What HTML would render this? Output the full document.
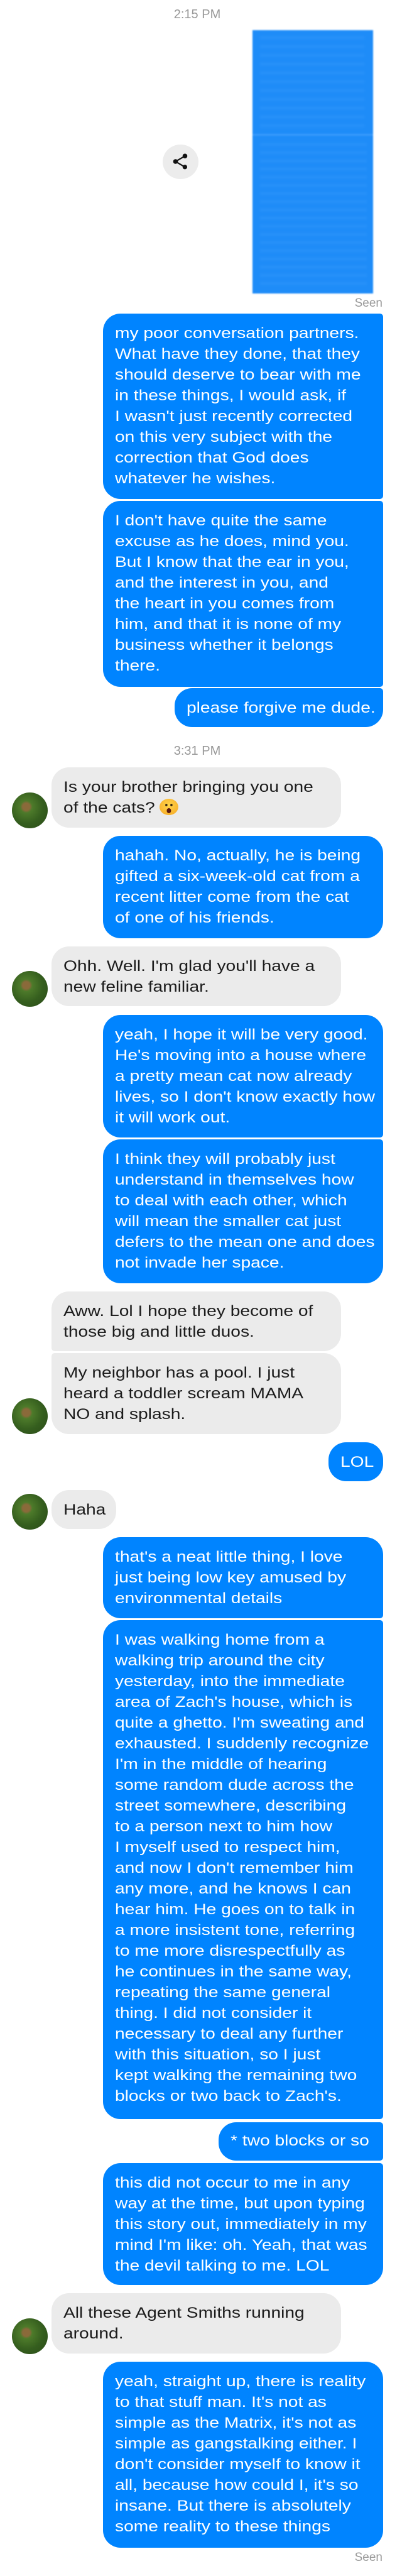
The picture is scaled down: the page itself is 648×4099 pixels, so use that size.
<!DOCTYPE html>
<html><head><meta charset="utf-8"><style>
*{margin:0;padding:0;box-sizing:border-box}
body{width:648px;height:4099px;background:#fff;position:relative;overflow:hidden;font-family:"Liberation Sans",Arial,sans-serif}
.b{position:absolute;font-size:24.5px;line-height:33px;padding:15px 19px 0 19px;white-space:nowrap;border-radius:28px}
.t{display:inline-block;transform:scaleX(1.15);transform-origin:0 0}
.s{background:#0084ff;color:#fff;left:164px;right:38px}
.r{background:#ebebeb;color:#1c1c1c;left:82px;width:461px}
.ts{position:absolute;left:0;width:628px;text-align:center;color:#999;font-size:20px;line-height:24px}
.seen{position:absolute;right:39px;color:#999;font-size:19px;line-height:22px}
.av{position:absolute;left:19px;width:57px;height:57px;border-radius:50%;background:radial-gradient(circle at 40% 40%,#8a6a3a 0 12%,#4d7a2a 20%,#355e1e 55%,#2a4a18 100%)}
.emo{display:inline-block;width:26px;height:26px;border-radius:50%;background:radial-gradient(circle at 50% 40%,#ffd54a,#f5a623);vertical-align:-4px;position:relative}
.emo:before{content:"";position:absolute;left:8px;top:8px;width:3px;height:4px;background:#3a2a10;border-radius:2px;box-shadow:7px 0 0 #3a2a10}
.emo:after{content:"";position:absolute;left:10px;top:15px;width:6px;height:8px;background:#5a1a10;border-radius:50%}
</style></head><body>
<div class="ts" style="top:11px">2:15 PM</div>
<div style="position:absolute;left:402px;top:48px;width:192px;height:419px;background:#1e8cf8;filter:blur(1px)">
<div style="position:absolute;left:12px;right:14px;top:10px;height:150px;background:repeating-linear-gradient(#4aa3ff 0 4px,#1e8cf8 4px 14px);opacity:.3;filter:blur(2px)"></div>
<div style="position:absolute;left:0;right:0;top:165px;height:3px;background:#4aa3ff;opacity:.6"></div>
<div style="position:absolute;left:12px;right:10px;top:180px;height:230px;background:repeating-linear-gradient(#4aa3ff 0 4px,#1e8cf8 4px 13px);opacity:.3;filter:blur(2px)"></div>
</div>
<div style="position:absolute;left:259px;top:230px;width:57px;height:55px;border-radius:50%;background:#ececec"></div>
<svg style="position:absolute;left:272px;top:242px" width="30" height="30" viewBox="0 0 24 24"><path fill="#111" d="M18 16.1c-.8 0-1.5.3-2 .8l-7.1-4.2c.1-.2.1-.5.1-.7s0-.5-.1-.7L16 7.2c.5.5 1.2.8 2 .8 1.7 0 3-1.3 3-3s-1.3-3-3-3-3 1.300-3 3c0 .2 0 .5.1.7L8 9.8C7.5 9.3 6.8 9 6 9c-1.7 0-3 1.3-3 3s1.3 3 3 3c.8 0 1.5-.3 2-.8l7.1 4.2c-.1.2-.1.4-.1.6 0 1.6 1.3 2.900 2.900 2.900s2.900-1.300 2.900-2.900-1.200-2.900-2.800-2.900z"/></svg>
<div class="seen" style="top:472px">Seen</div>

<div class="b s" style="top:499px;height:295px;border-radius:28px 5px 5px 28px"><span class="t">my poor conversation partners.<br>What have they done, that they<br>should deserve to bear with me<br>in these things, I would ask, if<br>I wasn't just recently corrected<br>on this very subject with the<br>correction that God does<br>whatever he wishes.</span></div>
<div class="b s" style="top:797px;height:296px;border-radius:28px 5px 5px 28px"><span class="t">I don't have quite the same<br>excuse as he does, mind you.<br>But I know that the ear in you,<br>and the interest in you, and<br>the heart in you comes from<br>him, and that it is none of my<br>business whether it belongs<br>there.</span></div>
<div class="b s" style="top:1095px;height:62px;left:278px;border-radius:28px 5px 28px 28px"><span class="t">please forgive me dude.</span></div>

<div class="ts" style="top:1183px">3:31 PM</div>
<div class="b r" style="top:1221px;height:96px"><span class="t">Is your brother bringing you one<br>of the cats? <span class="emo"></span></span></div>
<div class="av" style="top:1261px"></div>
<div class="b s" style="top:1330px;height:163px"><span class="t">hahah. No, actually, he is being<br>gifted a six-week-old cat from a<br>recent litter come from the cat<br>of one of his friends.</span></div>
<div class="b r" style="top:1506px;height:95px"><span class="t">Ohh. Well. I'm glad you'll have a<br>new feline familiar.</span></div>
<div class="av" style="top:1545px"></div>
<div class="b s" style="top:1615px;height:195px;border-radius:28px 28px 5px 28px"><span class="t">yeah, I hope it will be very good.<br>He's moving into a house where<br>a pretty mean cat now already<br>lives, so I don't know exactly how<br>it will work out.</span></div>
<div class="b s" style="top:1813px;height:229px;border-radius:28px 5px 28px 28px"><span class="t">I think they will probably just<br>understand in themselves how<br>to deal with each other, which<br>will mean the smaller cat just<br>defers to the mean one and does<br>not invade her space.</span></div>
<div class="b r" style="top:2055px;height:95px;border-radius:28px 28px 28px 5px"><span class="t">Aww. Lol I hope they become of<br>those big and little duos.</span></div>
<div class="b r" style="top:2153px;height:129px;border-radius:5px 28px 28px 28px"><span class="t">My neighbor has a pool. I just<br>heard a toddler scream MAMA<br>NO and splash.</span></div>
<div class="av" style="top:2225px"></div>
<div class="b s" style="top:2295px;height:62px;left:523px"><span class="t">LOL</span></div>
<div class="b r" style="top:2371px;height:62px;width:103px"><span class="t">Haha</span></div>
<div class="av" style="top:2377px"></div>
<div class="b s" style="top:2446px;height:129px;border-radius:28px 28px 5px 28px"><span class="t">that's a neat little thing, I love<br>just being low key amused by<br>environmental details</span></div>
<div class="b s" style="top:2578px;height:794px;border-radius:28px 5px 5px 28px"><span class="t">I was walking home from a<br>walking trip around the city<br>yesterday, into the immediate<br>area of Zach's house, which is<br>quite a ghetto. I'm sweating and<br>exhausted. I suddenly recognize<br>I'm in the middle of hearing<br>some random dude across the<br>street somewhere, describing<br>to a person next to him how<br>I myself used to respect him,<br>and now I don't remember him<br>any more, and he knows I can<br>hear him. He goes on to talk in<br>a more insistent tone, referring<br>to me more disrespectfully as<br>he continues in the same way,<br>repeating the same general<br>thing. I did not consider it<br>necessary to deal any further<br>with this situation, so I just<br>kept walking the remaining two<br>blocks or two back to Zach's.</span></div>
<div class="b s" style="top:3377px;height:61px;left:348px;padding-top:13px;border-radius:28px 5px 5px 28px"><span class="t">* two blocks or so</span></div>
<div class="b s" style="top:3442px;height:194px;border-radius:28px 5px 28px 28px"><span class="t">this did not occur to me in any<br>way at the time, but upon typing<br>this story out, immediately in my<br>mind I'm like: oh. Yeah, that was<br>the devil talking to me. LOL</span></div>
<div class="b r" style="top:3649px;height:96px"><span class="t">All these Agent Smiths running<br>around.</span></div>
<div class="av" style="top:3689px"></div>
<div class="b s" style="top:3758px;height:296px"><span class="t">yeah, straight up, there is reality<br>to that stuff man. It's not as<br>simple as the Matrix, it's not as<br>simple as gangstalking either. I<br>don't consider myself to know it<br>all, because how could I, it's so<br>insane. But there is absolutely<br>some reality to these things</span></div>
<div class="seen" style="top:4059px">Seen</div>
</body></html>
